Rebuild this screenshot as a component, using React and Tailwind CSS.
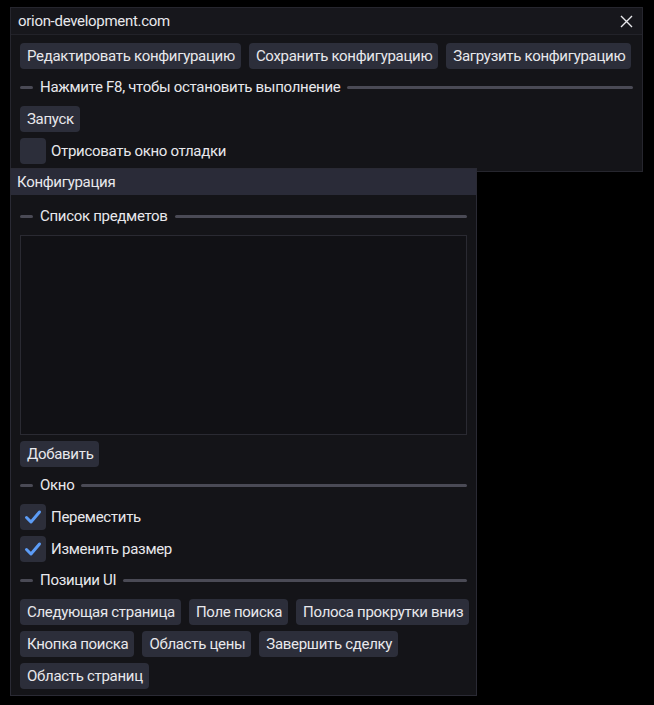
import React from 'react';

const font = { fontFamily: 'Roboto, "Noto Sans", sans-serif' };

const Btn = ({ children }) => (
  <div className="h-[26px] pl-[7px] pr-[6px] flex items-center rounded-[4px] bg-[#2c2e3a] text-[#e8e8ec] text-[15px] whitespace-nowrap">
    {children}
  </div>
);

const Separator = ({ label }) => (
  <div className="flex items-center h-[25px] text-[15px] text-[#e8e8ec]">
    <div className="w-[13px] h-[3px] bg-[#4a4a55] rounded-full" />
    <span className="mx-[7px] whitespace-nowrap">{label}</span>
    <div className="flex-1 h-[3px] bg-[#4a4a55] rounded-full" />
  </div>
);

const Check = ({ label, checked }) => (
  <div className="flex items-center h-[26px] text-[15px] text-[#e8e8ec]">
    <div className="w-[26px] h-[26px] rounded-[4px] bg-[#2c2e3a] flex items-center justify-center">
      {checked && (
        <svg width="18" height="18" viewBox="0 0 18 18">
          <path d="M2.5 9.5 L7 14 L15.5 4" fill="none" stroke="#5c9cf6" strokeWidth="3" strokeLinecap="round" strokeLinejoin="round" />
        </svg>
      )}
    </div>
    <span className="ml-[5px]">{label}</span>
  </div>
);

export default function App() {
  return (
    <div className="relative w-[654px] h-[705px] bg-black overflow-hidden tracking-[-0.3px]" style={font}>
      {/* main window */}
      <div className="absolute left-[10px] top-[7px] w-[633px] h-[165px] border border-[#26262e] bg-[#141418] flex flex-col">
        <div className="h-[27px] flex items-center justify-between pl-[7px] pr-[9px] bg-[#17171c] border-b border-[#222229] text-[15px] text-[#e8e8ec]">
          <span>orion-development.com</span>
          <svg width="13" height="13" viewBox="0 0 13 13">
            <path d="M1 1 L12 12 M12 1 L1 12" stroke="#e8e8ec" strokeWidth="1.4" />
          </svg>
        </div>
        <div className="flex flex-col px-[9px] pt-[8px] gap-[6px]">
          <div className="flex gap-[8px]">
            <Btn>Редактировать конфигурацию</Btn>
            <Btn>Сохранить конфигурацию</Btn>
            <Btn>Загрузить конфигурацию</Btn>
          </div>
          <Separator label="Нажмите F8, чтобы остановить выполнение" />
          <div className="flex">
            <Btn>Запуск</Btn>
          </div>
          <Check label="Отрисовать окно отладки" />
        </div>
      </div>

      {/* config window */}
      <div className="absolute left-[10px] top-[168px] w-[467px] h-[528px] border border-[#2a2a34] bg-[#141418] flex flex-col">
        <div className="h-[26px] flex items-center pl-[6px] bg-[#2a2b38] text-[15px] text-[#e8e8ec]">
          Конфигурация
        </div>
        <div className="flex flex-col px-[9px] pt-[9px] gap-[6px]">
          <Separator label="Список предметов" />
          <div className="h-[200px] border border-[#2a2a32] bg-[#111115]" />
          <div className="flex">
            <Btn>Добавить</Btn>
          </div>
          <Separator label="Окно" />
          <Check label="Переместить" checked />
          <Check label="Изменить размер" checked />
          <Separator label="Позиции UI" />
          <div className="flex gap-[8px]">
            <Btn>Следующая страница</Btn>
            <Btn>Поле поиска</Btn>
            <Btn>Полоса прокрутки вниз</Btn>
          </div>
          <div className="flex gap-[8px]">
            <Btn>Кнопка поиска</Btn>
            <Btn>Область цены</Btn>
            <Btn>Завершить сделку</Btn>
          </div>
          <div className="flex">
            <Btn>Область страниц</Btn>
          </div>
        </div>
      </div>
    </div>
  );
}
